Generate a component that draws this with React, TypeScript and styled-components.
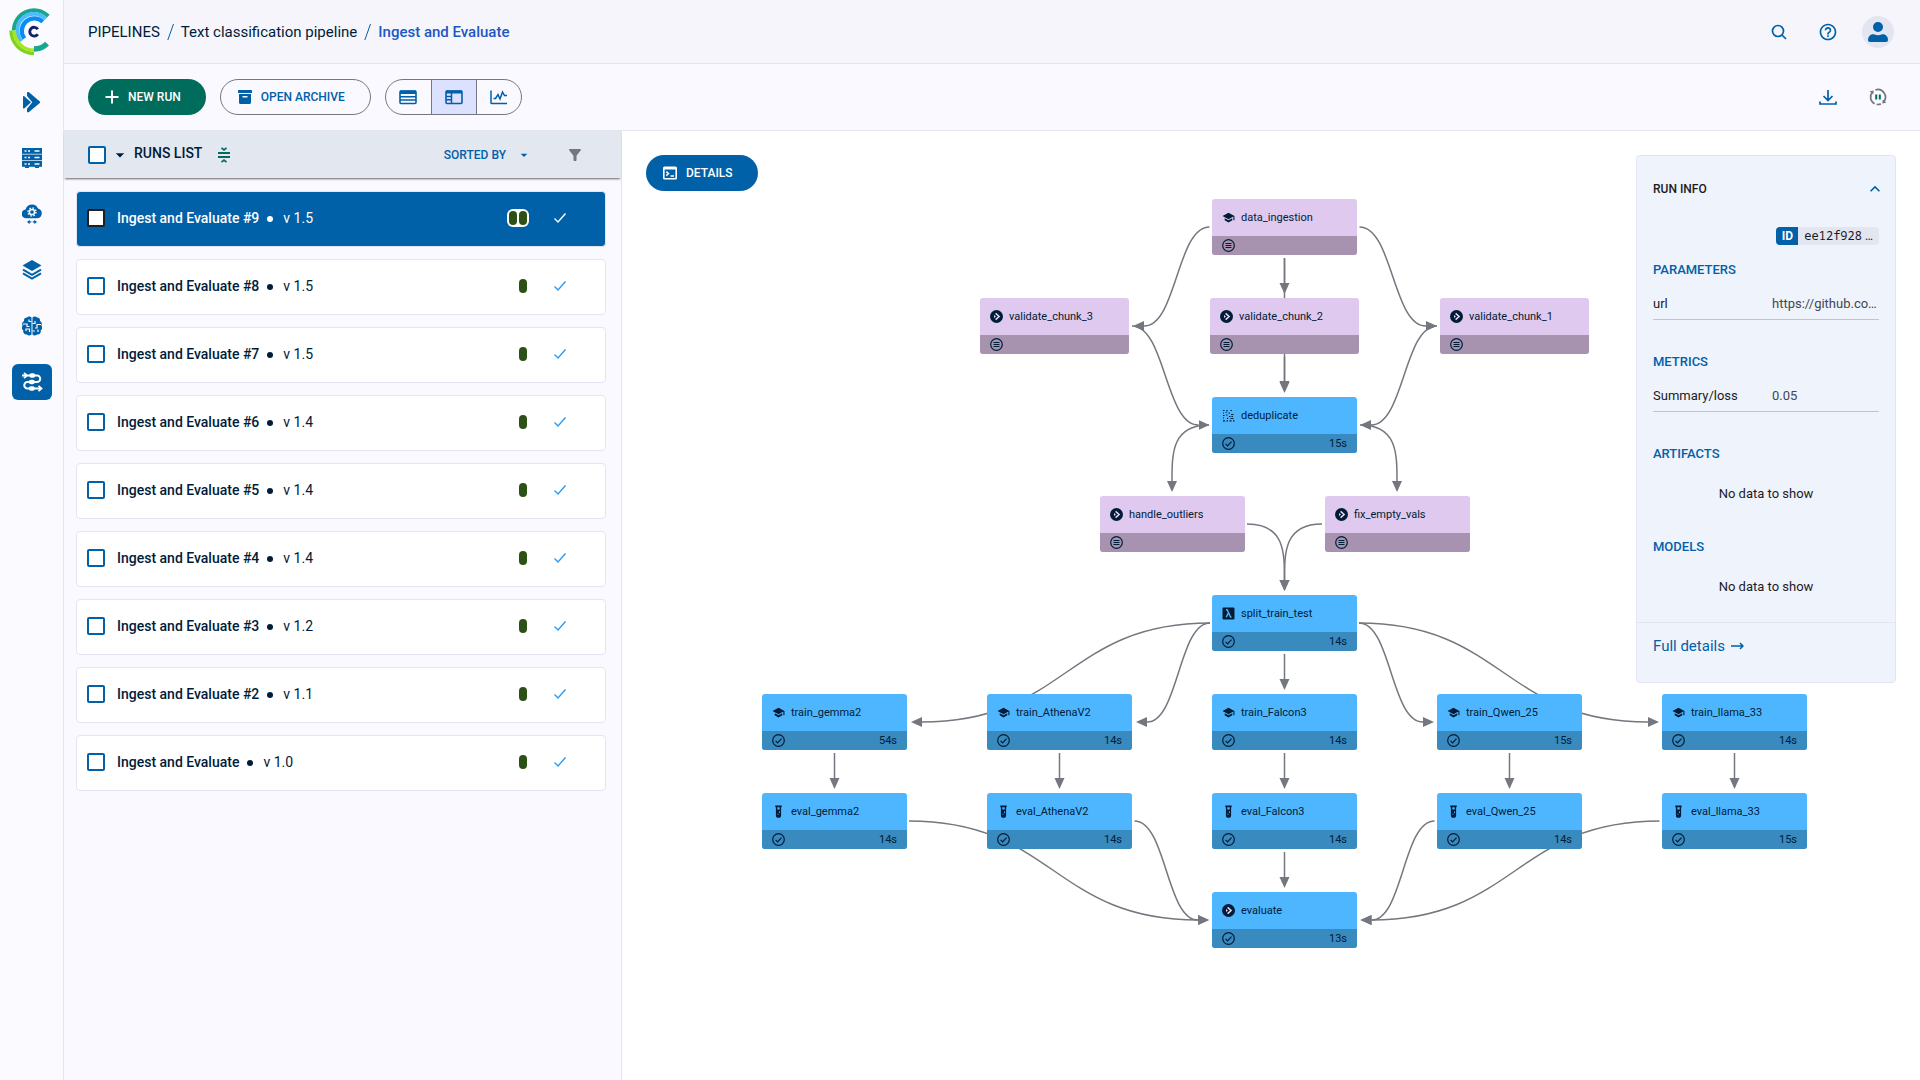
import React from 'react';
import styled, { createGlobalStyle, css } from 'styled-components';
import {
  MdSchool,
  MdHelpOutline,
  MdArrowDropDown,
  MdFilterAlt,
  MdKeyboardArrowUp,
} from 'react-icons/md';

const color = {
  primary: '#0060a8',
  link: '#2057c4',
  ink: '#001c38',
  body: '#1b1b1f',
  line: '#e3e6f0',
  outline: '#74777f',
  green: '#006c5b',
};

const GlobalStyle = createGlobalStyle`
  *, *::before, *::after { box-sizing: border-box; }
  html, body, #root { height: 100%; }
  body {
    margin: 0;
    background: #faf9ff;
    color: ${color.body};
    font-family: Roboto, "Noto Sans", sans-serif;
    font-size: 14px;
    line-height: 20px;
  }
  button, input { font: inherit; }
  button { margin: 0; padding: 0; border: 0; background: none; cursor: pointer; }
  a { color: inherit; text-decoration: none; }
  h1, h2, h3, ul, ol, dl, dd { margin: 0; padding: 0; }
  ul, ol { list-style: none; }
  svg { display: block; flex: none; }
`;

/* ---------- shell ---------- */

const Shell = styled.div`
  display: flex;
  min-height: 100vh;
`;

const Sidebar = styled.nav`
  display: flex;
  flex-direction: column;
  align-items: center;
  width: 64px;
  flex: none;
  padding: 8px 0;
  background: #fbfbff;
  border-right: 1px solid ${color.line};
`;

const LogoLink = styled.a`
  display: block;
  margin: 0 6px 28px 2px;
`;

const NavList = styled.ul`
  display: grid;
  gap: 20px;
`;

const NavLink = styled.a<{ $active?: boolean }>`
  display: flex;
  align-items: center;
  justify-content: center;
  width: 40px;
  height: 36px;
  border-radius: 6px;
  color: ${(p) => (p.$active ? '#fff' : color.primary)};
  background: ${(p) => (p.$active ? color.primary : 'transparent')};
`;

const Page = styled.div`
  display: flex;
  flex: 1;
  flex-direction: column;
  min-width: 0;
`;

const TopBar = styled.header`
  display: flex;
  align-items: center;
  justify-content: space-between;
  height: 64px;
  padding: 0 26px 0 24px;
  background: #f5f5fb;
  border-bottom: 1px solid ${color.line};
`;

const Crumbs = styled.ol`
  display: flex;
  gap: 7px;
  color: ${color.ink};
  font-size: 15px;
`;

const Crumb = styled.li<{ $current?: boolean }>`
  display: flex;
  gap: 7px;
  ${(p) =>
    p.$current &&
    css`
      color: ${color.link};
      font-weight: 500;
    `}
`;

const Slash = styled.svg`
  width: 7px;
  height: 20px;
  color: ${color.primary};
`;

const Actions = styled.div<{ $gap: number }>`
  display: flex;
  align-items: center;
  gap: ${(p) => p.$gap}px;
`;

const IconButton = styled.button<{ $size?: number }>`
  display: flex;
  align-items: center;
  justify-content: center;
  width: ${(p) => p.$size ?? 20}px;
  height: ${(p) => p.$size ?? 20}px;
  color: ${color.primary};
`;

const Avatar = styled(IconButton)`
  border-radius: 50%;
  background: ${color.line};
`;

const Toolbar = styled.div`
  display: flex;
  align-items: center;
  justify-content: space-between;
  height: 67px;
  padding: 0 32px 0 24px;
  border-bottom: 1px solid ${color.line};
`;

const PillButton = styled.button<{ $kind: 'green' | 'blue' | 'outline' }>`
  display: flex;
  align-items: center;
  gap: 9px;
  height: 36px;
  padding: 0 25px 0 17px;
  border-radius: 18px;
  font-size: 12px;
  font-weight: 500;
  white-space: nowrap;
  ${(p) =>
    p.$kind === 'outline'
      ? css`
          border: 1px solid ${color.outline};
          color: ${color.primary};
        `
      : css`
          background: ${p.$kind === 'green' ? color.green : color.primary};
          color: #fff;
        `}
`;

const Segments = styled.div`
  display: flex;
  height: 36px;
  overflow: hidden;
  border: 1px solid ${color.outline};
  border-radius: 18px;
`;

const Segment = styled.button<{ $on?: boolean }>`
  display: flex;
  align-items: center;
  justify-content: center;
  width: 45px;
  color: ${color.primary};
  background: ${(p) => (p.$on ? '#dbe1ff' : 'transparent')};
  & + & { border-left: 1px solid ${color.outline}; }
`;

const Body = styled.main`
  display: flex;
  flex: 1;
  min-height: 0;
`;

/* ---------- runs list ---------- */

const RunsPane = styled.section`
  width: 558px;
  flex: none;
  border-right: 1px solid ${color.line};
`;

const RunsHead = styled.div`
  display: flex;
  align-items: center;
  height: 47px;
  padding: 0 38px 0 24px;
  background: #e3e7f0;
  box-shadow: 0 2px 2px -1px rgba(0, 0, 0, 0.6);
`;

const RunsTitle = styled.h1`
  margin: 0 12px 4px 0;
  color: ${color.ink};
  font-size: 14px;
  font-weight: 500;
`;

const SortButton = styled.button`
  display: flex;
  align-items: center;
  gap: 10px;
  margin: 0 35px 0 auto;
  color: ${color.primary};
  font-size: 12px;
  font-weight: 500;
`;

const CaretButton = styled(IconButton)`
  margin: 0 4px 0 4px;
  color: ${color.ink};
`;

const Check = styled.input<{ $dark?: boolean }>`
  appearance: none;
  width: 18px;
  height: 18px;
  flex: none;
  margin: 0;
  border: 2px solid ${(p) => (p.$dark ? '#1f1f1f' : color.primary)};
  border-radius: 2px;
  background: #fff;
`;

const RunItems = styled.ul`
  display: grid;
  gap: 12px;
  padding: 13px 15px 24px 12px;
`;

const Run = styled.li<{ $selected?: boolean }>`
  display: flex;
  align-items: center;
  height: 56px;
  padding: 0 38px 2px 10px;
  border: 1px solid ${color.line};
  border-radius: 4px;
  background: ${(p) => (p.$selected ? color.primary : '#fff')};
  color: ${(p) => (p.$selected ? '#fff' : color.ink)};
`;

const RunName = styled.label`
  margin-left: 12px;
  font-weight: 500;
`;

const Dot = styled.span`
  width: 6px;
  height: 6px;
  margin: 2px 10px 0 8px;
  border-radius: 50%;
  background: currentColor;
`;

const Tags = styled.span<{ $selected?: boolean }>`
  display: flex;
  gap: 2px;
  margin: 0 24px 0 auto;
  padding: 2px;
  border-radius: 6px;
  background: ${(p) => (p.$selected ? '#fff' : 'transparent')};
`;

const Tag = styled.i`
  width: 8px;
  height: 14px;
  border-radius: 4px;
  background: #2d5016;
`;

const DoneMark = styled.svg<{ $selected?: boolean }>`
  width: 14px;
  height: 12px;
  color: ${(p) => (p.$selected ? '#fff' : '#2f9bf0')};
`;

/* ---------- graph ---------- */

const Canvas = styled.section`
  position: relative;
  flex: 1;
  min-width: 0;
  overflow: hidden;
  padding: 24px;
  background: #fff;
`;

const Edges = styled.svg`
  position: absolute;
  inset: 0;
  width: 100%;
  height: 100%;
`;

const NodeBox = styled.article<{ $x: number; $y: number; $w: number; $cached?: boolean }>`
  position: absolute;
  left: ${(p) => p.$x}px;
  top: ${(p) => p.$y}px;
  width: ${(p) => p.$w}px;
  overflow: hidden;
  border-radius: 3px;
  background: ${(p) => (p.$cached ? '#dfc9ef' : '#4eb6ff')};
  color: ${color.ink};
  font-size: 11px;
`;

const NodeTop = styled.div`
  display: flex;
  align-items: center;
  gap: 6px;
  height: 37px;
  padding: 0 10px;
`;

const NodeFoot = styled.div<{ $cached?: boolean }>`
  display: flex;
  align-items: center;
  justify-content: space-between;
  height: 19px;
  padding: 0 10px;
  background: ${(p) => (p.$cached ? '#a793b0' : '#388abf')};
`;

const DetailsButton = styled(PillButton)`
  position: relative;
`;

/* ---------- run info ---------- */

const Info = styled.aside`
  position: absolute;
  top: 24px;
  right: 24px;
  width: 260px;
  border: 1px solid ${color.line};
  border-radius: 4px;
  background: #eff3fc;
`;

const InfoBody = styled.div`
  padding: 0 16px 5px;
`;

const InfoHead = styled.div`
  display: flex;
  align-items: center;
  justify-content: space-between;
  height: 66px;
  margin-right: -6px;
`;

const InfoTitle = styled.h2`
  font-size: 12px;
  font-weight: 500;
`;

const IdRow = styled.div`
  display: flex;
  justify-content: flex-end;
  margin: 5px 0 15px;
`;

const IdChip = styled.button`
  display: flex;
  overflow: hidden;
  height: 18px;
  border-radius: 4px;
  background: ${color.line};
  color: ${color.body};
  font-size: 12px;
  line-height: 18px;
`;

const IdLabel = styled.b`
  width: 22px;
  background: ${color.primary};
  color: #fff;
  text-align: center;
`;

const IdValue = styled.span`
  display: flex;
  gap: 3px;
  padding: 0 6px;
`;

const Mono = styled.span`
  font-family: "Noto Sans Mono", "DejaVu Sans Mono", monospace;
`;

const GroupTitle = styled.h3`
  color: ${color.primary};
  font-size: 13px;
  font-weight: 500;
`;

const Pair = styled.dl`
  display: grid;
  grid-template-columns: 119px minmax(0, 1fr);
  height: 32px;
  margin: 8px 0 32px;
  padding-top: 6px;
  border-bottom: 1px solid #c0c5d0;
  font-size: 13px;
`;

const PairValue = styled.dd`
  color: #44474e;
  white-space: nowrap;
`;

const Empty = styled.p<{ $last?: boolean }>`
  margin: 0 0 ${(p) => (p.$last ? 0 : 13)}px;
  padding: 20px 0;
  font-size: 13px;
  text-align: center;
`;

const InfoFoot = styled.div`
  padding: 13px 16px 26px;
  border-top: 1px solid ${color.line};
`;

const FullLink = styled.a`
  display: flex;
  align-items: center;
  gap: 6px;
  color: ${color.primary};
  font-size: 15px;
`;

/* ---------- icons ---------- */

const Logo = () => (
  <svg width="42" height="48" viewBox="0 0 42 48" fill="none" aria-hidden="true">
    <path d="M39.3 8.2A20.2 20.2 0 0 0 4.8 22.5" stroke="#16a78c" strokeWidth="3.9" />
    <path d="M38.1 35.6A18.5 18.5 0 0 1 25 41" stroke="#16a78c" strokeWidth="5.400" />
    <path d="M36.7 10.8A16.5 16.5 0 0 0 12.4 33.1" stroke="#4dbbff" strokeWidth="3.8" />
    <path d="M33.8 13.7A12.5 12.5 0 0 0 15.4 30.5" stroke="#0a8cf5" strokeWidth="4.2" />
    <path d="M2 22.5A23 23 0 0 0 25 45.5" stroke="#7ed321" strokeWidth="3.4" />
    <path d="M5.3 22.5A19.7 19.7 0 0 0 25 42.2" stroke="#a8e420" strokeWidth="3.3" />
    <path d="M28.8 21.2a4.4 4.4 0 1 0 0 5" stroke="#12206b" strokeWidth="2.9" />
  </svg>
);

const ProjectsIcon = () => (
  <svg width="20" height="22" viewBox="-1 -1 20 22" fill="currentColor" aria-hidden="true">
    <path d="M4 .6C4 0 5.200-.3 6 .3l10.800 9.200c.5.400.5 1 0 1.500L6 20c-.8.600-2 .3-2-.3v-2.900l5.300-6.500L4 3.900z" />
    <path d="M0 4.600c0-.5.900-.8 1.500-.2l6.500 5.900-6.500 5.900c-.6.600-1.500.300-1.500-.2z" />
  </svg>
);

const ServersIcon = () => (
  <svg width="20" height="22" viewBox="0 0 20 22" fill="currentColor" aria-hidden="true">
    {[1, 7.5, 14].map((y) => (
      <g key={y}>
        <rect x="0" y={y} width="20" height="5.8" />
        <path d={`M2.5 ${y + 2.9}h2M6 ${y + 2.9}h2M12.5 ${y + 2.9}h5`} stroke="#fbfbff" strokeWidth="1.5" />
      </g>
    ))}
    <path d="M3 19.5h4V21H3zM13 19.5h4V21h-4z" />
  </svg>
);

const CloudIcon = () => (
  <svg width="20" height="20" viewBox="0 0 20 20" fill="currentColor" aria-hidden="true">
    <path d="M4.5 14.3A4.4 4.4 0 0 1 3.6 5.5 6.6 6.6 0 0 1 16 4.5a5 5 0 0 1-.5 9.8z" />
    <circle cx="10" cy="8" r="2.6" fill="none" stroke="#fbfbff" strokeWidth="1.5" />
    <circle cx="10" cy="8" r="4" fill="none" stroke="#fbfbff" strokeWidth="1.4" strokeDasharray="1.5 1.64" />
    <path d="m5 17.9 2.7-2.2v1.5h1.6v1.4H7.7v1.5zM15 17.9l-2.7-2.2v1.5h-1.6v1.4h1.6v1.5z" />
  </svg>
);

const LayersIcon = () => (
  <svg width="20" height="20" viewBox="0 0 20 20" fill="currentColor" aria-hidden="true">
    <path d="m10 0 9.5 5.5L10 11 .5 5.5z" />
    <path d="m1 9.6 9 5.2 9-5.2M1 13.4l9 5.2 9-5.2" fill="none" stroke="currentColor" strokeWidth="1.9" />
  </svg>
);

const BrainIcon = () => (
  <svg width="20" height="20" viewBox="0 0 20 20" fill="currentColor" aria-hidden="true">
    <path d="M9.5 1.6A3 3 0 0 0 5 1.5 3.2 3.2 0 0 0 2 5a3.3 3.3 0 0 0-1.3 4.500 3.300 3.300 0 0 0 .6 4.800A3.300 3.300 0 0 0 5 18.500a3 3 0 0 0 4.500-.1z" />
    <path d="M10.500 1.600a3 3 0 0 1 4.500-.1A3.200 3.200 0 0 1 18 5a3.300 3.300 0 0 1 1.300 4.500 3.300 3.300 0 0 1-.6 4.800 3.300 3.300 0 0 1-3.700 4.200 3 3 0 0 1-4.500-.1z" />
    <path
      d="M9.5 5.5H7V3.6M1 8h4v2.5h2.5M4 15v-2h3.5v3M10.5 7.5H13V5M19 8.5h-4V12h-2M16 16v-2.5M10.5 15H13"
      fill="none"
      stroke="#fbfbff"
      strokeWidth="1.2"
    />
  </svg>
);

const PipelinesIcon = () => (
  <svg width="22" height="20" viewBox="0 0 22 20" fill="none" stroke="currentColor" aria-hidden="true">
    <path d="M1 3.500h15a3.200 3.200 0 0 1 0 6.500H6.500a3.200 3.200 0 0 0 0 6.500H20" strokeWidth="2" />
    <path d="m3 .8 3 2.700-3 2.700M17.500 13.800l3 2.700-3 2.700" strokeWidth="1.800" />
    <path d="M10.500 3.500h1.600M10 10h1.600M10 16.500h1.600" strokeWidth="4.400" strokeLinecap="round" />
  </svg>
);

const SearchIcon = () => (
  <svg width="16" height="16" viewBox="0 0 16 16" fill="none" stroke="currentColor" strokeWidth="1.7" aria-hidden="true">
    <circle cx="7" cy="7" r="5.5" />
    <path d="m11 11 4 4" />
  </svg>
);

const UserIcon = () => (
  <svg width="20" height="20" viewBox="0 0 20 20" fill="currentColor" aria-hidden="true">
    <circle cx="10" cy="5" r="5" />
    <path d="M3.500 12.600c1-.5 2-.4 3 0 2.200.9 4.800.9 7 0 1-.4 2-.5 3 0 2 .9 3.500 2.800 3.500 5.400 0 1.200-.8 2-2 2H2c-1.200 0-2-.8-2-2 0-2.600 1.500-4.500 3.500-5.400z" />
  </svg>
);

const PlusIcon = () => (
  <svg width="14" height="14" viewBox="0 0 14 14" stroke="currentColor" strokeWidth="2" aria-hidden="true">
    <path d="M7 .5v13M.5 7h13" />
  </svg>
);

const ArchiveIcon = () => (
  <svg width="14" height="14" viewBox="0 0 14 14" fill="currentColor" aria-hidden="true">
    <rect x="0" y="0" width="14" height="3" rx=".6" />
    <path d="M1 4h12v8.500c0 .8-.7 1.500-1.500 1.500h-9C1.700 14 1 13.300 1 12.500zm3.500 2v1.500h5V6z" fillRule="evenodd" />
  </svg>
);

const TableIcon = () => (
  <svg width="18" height="16" viewBox="0 0 18 16" aria-hidden="true">
    <rect x="1" y="2" width="16" height="12.5" rx="1" fill="none" stroke="currentColor" strokeWidth="1.6" />
    <path d="M1 3.3h16" stroke="currentColor" strokeWidth="3.4" />
    <path d="M1 7.7h16M1 11h16" stroke="currentColor" strokeWidth="1.5" />
  </svg>
);

const SplitIcon = () => (
  <svg width="18" height="16" viewBox="0 0 18 16" aria-hidden="true">
    <rect x="1" y="2" width="16" height="12.5" rx="1" fill="none" stroke="currentColor" strokeWidth="1.6" />
    <path d="M1 3h16" stroke="currentColor" strokeWidth="3" />
    <path d="M6.5 3v11.5M1 7.5h5M1 10.8h5" stroke="currentColor" strokeWidth="1.5" />
  </svg>
);

const ChartIcon = () => (
  <svg width="18" height="16" viewBox="0 0 18 16" fill="none" stroke="currentColor" aria-hidden="true">
    <path d="M1 1.500v12.300c0 .5.300.8.800.8H17" strokeWidth="1.500" />
    <path d="M3.500 9.500h2L8 5.500l2 4.500L12.500 3l2 3.500H17" strokeWidth="1.500" />
  </svg>
);

const DownloadIcon = () => (
  <svg width="18" height="18" viewBox="0 0 18 18" fill="none" stroke="currentColor" strokeWidth="1.7" aria-hidden="true">
    <path d="M9 2v10M4.500 8 9 12.500 13.500 8M1 13.500V16h16v-2.500" />
  </svg>
);

const RefreshIcon = () => (
  <svg width="18" height="18" viewBox="0 0 18 18" fill="none" stroke={color.outline} strokeWidth="1.7" aria-hidden="true">
    <path d="M5.6 15.7A7.500 7.500 0 0 1 3.200 4.300" />
    <path d="M6.400 2A7.500 7.500 0 0 1 14.800 13.700" />
    <path d="M7.600 16.400a7.500 7.500 0 0 0 4.200-.5" />
    <path d="M.6 3.200 4.800 2.600l-.6 3.900zM17.400 14.800l-4.200.6.6-3.900z" fill={color.outline} stroke="none" />
    <path d="M7.200 6.500v5M10.800 6.500v5" stroke={color.green} strokeWidth="2" />
  </svg>
);

const CompressIcon = () => (
  <svg width="12" height="16" viewBox="0 0 12 16" fill="none" stroke={color.green} aria-hidden="true">
    <path d="M0 6h12M0 10h12" strokeWidth="2" />
    <path d="m3.500.9 2.500 2 2.500-2M3.500 15.100l2.500-2 2.500 2" strokeWidth="1.800" />
  </svg>
);

const TerminalIcon = () => (
  <svg width="14" height="14" viewBox="0 0 14 14" fill="none" stroke="currentColor" aria-hidden="true">
    <rect x=".8" y="1.3" width="12.4" height="11.4" rx=".8" strokeWidth="1.6" />
    <path d="M.8 2.3h12.400" strokeWidth="2.400" />
    <path d="m3.300 5.600 2.200 2-2.200 2M7.500 10H11" strokeWidth="1.500" />
  </svg>
);

const ArrowIcon = () => (
  <svg width="13" height="10" viewBox="0 0 13 10" fill="none" stroke="currentColor" strokeWidth="1.5" aria-hidden="true">
    <path d="M0 5h12M9 2l3 3-3 3" />
  </svg>
);

const CircleArrowIcon = () => (
  <svg width="13" height="13" viewBox="0 0 13 13" aria-hidden="true">
    <circle cx="6.5" cy="6.5" r="6.5" fill={color.ink} />
    <path d="m5.600 3.400 3.500 3.100-3.500 3.100" fill="none" stroke="#e8d9f5" strokeWidth="1.500" />
    <path d="m4 5 1.900 1.500L4 8z" fill="#e8d9f5" />
  </svg>
);

const CachedIcon = () => (
  <svg width="13" height="13" viewBox="0 0 13 13" fill="none" stroke={color.ink} aria-hidden="true">
    <circle cx="6.5" cy="6.5" r="5.8" strokeWidth="1.2" />
    <path d="M3.5 4.5h6M3.5 6.5h6M3.5 8.5h6" strokeWidth="1.2" />
  </svg>
);

const DoneIcon = () => (
  <svg width="13" height="13" viewBox="0 0 13 13" fill="none" stroke={color.ink} strokeWidth="1.2" aria-hidden="true">
    <circle cx="6.5" cy="6.5" r="5.8" />
    <path d="m3.600 6.800 2 2 3.900-4.200" />
  </svg>
);

const TubeIcon = () => (
  <svg width="13" height="13" viewBox="0 0 13 13" fill={color.ink} aria-hidden="true">
    <path d="M3.300.5h6.400v1.700h-.6v8a2.600 2.600 0 0 1-5.200 0v-8h-.6z" />
    <path d="M5.300 2.300h2.400v2.200H5.300zM7 6.500h1V8H7zM5.500 8.800h1v1h-1z" fill="#4eb6ff" />
  </svg>
);

const LambdaIcon = () => (
  <svg width="13" height="13" viewBox="0 0 13 13" aria-hidden="true">
    <rect x=".5" y=".5" width="12" height="12" rx="1" fill={color.ink} />
    <path d="M4 2.800h1.200L8.500 10h1M6.500 5.600 4.200 10.200" fill="none" stroke="#4eb6ff" strokeWidth="1.400" />
  </svg>
);

const ScatterIcon = () => (
  <svg width="13" height="13" viewBox="0 0 13 13" fill="none" stroke={color.ink} strokeWidth="1.2" aria-hidden="true">
    <path d="M1 1.500h1.500M1 4h1M1 6.500h1.500M1 9h1M1 11.800h2M4.500 11.800H6M7.500 11.800h2M11 11.800h1.500" />
    <path d="M5 1v1.500M8.500 1.500H10M6.500 4H8M4 6h1.500M9 5.500h2.500M7 7.500h1.500M5 9.300h1.200M8.500 9.500h3M9.500 7.500H11M3.500 3.500h1" />
  </svg>
);

/* ---------- data ---------- */

const runs = [
  ['Ingest and Evaluate #9', 'v 1.5'],
  ['Ingest and Evaluate #8', 'v 1.5'],
  ['Ingest and Evaluate #7', 'v 1.5'],
  ['Ingest and Evaluate #6', 'v 1.4'],
  ['Ingest and Evaluate #5', 'v 1.4'],
  ['Ingest and Evaluate #4', 'v 1.4'],
  ['Ingest and Evaluate #3', 'v 1.2'],
  ['Ingest and Evaluate #2', 'v 1.1'],
  ['Ingest and Evaluate', 'v 1.0'],
];

const kinds = {
  school: <MdSchool size={13} />,
  step: <CircleArrowIcon />,
  scatter: <ScatterIcon />,
  lambda: <LambdaIcon />,
  tube: <TubeIcon />,
};

type Step = { name: string; kind: keyof typeof kinds; x: number; row: number; time?: string; wide?: boolean };

// x is the left edge on the canvas; rows are evenly spaced
const steps: Step[] = [
  { name: 'data_ingestion', kind: 'school', x: 590, row: 0 },
  { name: 'validate_chunk_3', kind: 'step', x: 358, row: 1, wide: true },
  { name: 'validate_chunk_2', kind: 'step', x: 588, row: 1, wide: true },
  { name: 'validate_chunk_1', kind: 'step', x: 818, row: 1, wide: true },
  { name: 'deduplicate', kind: 'scatter', x: 590, row: 2, time: '15s' },
  { name: 'handle_outliers', kind: 'step', x: 478, row: 3 },
  { name: 'fix_empty_vals', kind: 'step', x: 703, row: 3 },
  { name: 'split_train_test', kind: 'lambda', x: 590, row: 4, time: '14s' },
  { name: 'train_gemma2', kind: 'school', x: 140, row: 5, time: '54s' },
  { name: 'train_AthenaV2', kind: 'school', x: 365, row: 5, time: '14s' },
  { name: 'train_Falcon3', kind: 'school', x: 590, row: 5, time: '14s' },
  { name: 'train_Qwen_25', kind: 'school', x: 815, row: 5, time: '15s' },
  { name: 'train_llama_33', kind: 'school', x: 1040, row: 5, time: '14s' },
  { name: 'eval_gemma2', kind: 'tube', x: 140, row: 6, time: '14s' },
  { name: 'eval_AthenaV2', kind: 'tube', x: 365, row: 6, time: '14s' },
  { name: 'eval_Falcon3', kind: 'tube', x: 590, row: 6, time: '14s' },
  { name: 'eval_Qwen_25', kind: 'tube', x: 815, row: 6, time: '14s' },
  { name: 'eval_llama_33', kind: 'tube', x: 1040, row: 6, time: '15s' },
  { name: 'evaluate', kind: 'step', x: 590, row: 7, time: '13s' },
];

const FIRST_ROW = 68;
const ROW_STEP = 99;
const rowTop = (row: number) => FIRST_ROW + row * ROW_STEP;
const mid = (row: number) => rowTop(row) + 28;

const HEAD = 11;

// S-curve between two side ports, stopping at the arrow head's base
const across = (x1: number, r1: number, tip: number, r2: number) => {
  const x2 = tip - Math.sign(tip - x1) * HEAD;
  const m = (x1 + x2) / 2;
  return `M${x1} ${mid(r1)}C${m} ${mid(r1)} ${m} ${mid(r2)} ${x2} ${mid(r2)}`;
};

// quarter turn from a side port down onto the top of the next node
const turn = (x1: number, r1: number, x2: number) => {
  const y2 = rowTop(r1 + 1) - 4 - HEAD;
  return `M${x1} ${mid(r1)}C${x2} ${mid(r1)} ${x2} ${(mid(r1) + y2) / 2} ${x2} ${y2}`;
};

const down = (x: number, r: number) => `M${x} ${rowTop(r) + 59}V${rowTop(r + 1) - 4 - HEAD}`;

const edges = [
  across(737.5, 0, 815, 1),
  across(587.5, 0, 511, 1),
  across(815, 1, 738, 2),
  across(510, 1, 587.5, 2),
  down(662.5, 0),
  'M662.5 127V250',
  down(662.5, 1),
  turn(738, 2, 775),
  turn(587, 2, 550),
  turn(625, 3, 662.5),
  turn(700, 3, 662.5),
  across(737, 4, 812, 5),
  across(737, 4, 1037, 5),
  across(588, 4, 514, 5),
  across(588, 4, 289, 5),
  down(662.5, 4),
  ...[212.5, 437.5, 662.5, 887.5, 1112.5].map((x) => down(x, 5)),
  down(662.5, 6),
  across(287, 6, 587, 7),
  across(512.5, 6, 587, 7),
  across(812.5, 6, 738.5, 7),
  across(1037.5, 6, 738.5, 7),
];

const Graph = () => (
  <>
    <Edges aria-hidden="true">
      <defs>
        <marker id="head" markerUnits="userSpaceOnUse" markerWidth="12" markerHeight="12" refX="0" refY="5" orient="auto">
          <path d="M0 0L11 5L0 10z" fill={color.outline} />
        </marker>
      </defs>
      <g fill="none" stroke={color.outline} strokeWidth="1.5">
        {edges.map((d) => (
          <path key={d} d={d} markerEnd="url(#head)" />
        ))}
      </g>
    </Edges>
    {steps.map((s) => (
      <NodeBox key={s.name} $x={s.x} $y={rowTop(s.row)} $w={s.wide ? 149 : 145} $cached={!s.time}>
        <NodeTop>
          {kinds[s.kind]}
          {s.name}
        </NodeTop>
        <NodeFoot $cached={!s.time}>
          {s.time ? <DoneIcon /> : <CachedIcon />}
          {s.time}
        </NodeFoot>
      </NodeBox>
    ))}
  </>
);

const RunInfo = () => (
  <Info>
    <InfoBody>
      <InfoHead>
        <InfoTitle>RUN INFO</InfoTitle>
        <IconButton $size={20} aria-label="Collapse run info">
          <MdKeyboardArrowUp size={20} />
        </IconButton>
      </InfoHead>
      <IdRow>
        <IdChip>
          <IdLabel>ID</IdLabel>
          <IdValue>
            <Mono>ee12f928</Mono>
            <span>…</span>
          </IdValue>
        </IdChip>
      </IdRow>
      <GroupTitle>PARAMETERS</GroupTitle>
      <Pair>
        <dt>url</dt>
        <PairValue>https://github.co…</PairValue>
      </Pair>
      <GroupTitle>METRICS</GroupTitle>
      <Pair>
        <dt>Summary/loss</dt>
        <PairValue>0.05</PairValue>
      </Pair>
      <GroupTitle>ARTIFACTS</GroupTitle>
      <Empty>No data to show</Empty>
      <GroupTitle>MODELS</GroupTitle>
      <Empty $last>No data to show</Empty>
    </InfoBody>
    <InfoFoot>
      <FullLink href="#details">
        Full details
        <ArrowIcon />
      </FullLink>
    </InfoFoot>
  </Info>
);

const nav = [
  ['Projects', <ProjectsIcon />],
  ['Datasets', <ServersIcon />],
  ['Orchestration', <CloudIcon />],
  ['Reports', <LayersIcon />],
  ['Models', <BrainIcon />],
  ['Pipelines', <PipelinesIcon />],
] as const;

const Divider = () => (
  <Slash viewBox="0 0 7 20" aria-hidden="true">
    <path d="M6.5 2 .8 18" stroke="currentColor" />
  </Slash>
);

export default function App() {
  return (
    <Shell>
      <GlobalStyle />
      <Sidebar>
        <LogoLink href="#home" aria-label="Home">
          <Logo />
        </LogoLink>
        <NavList>
          {nav.map(([label, icon]) => (
            <li key={label}>
              <NavLink href={`#${label}`} aria-label={label} $active={label === 'Pipelines'}>
                {icon}
              </NavLink>
            </li>
          ))}
        </NavList>
      </Sidebar>
      <Page>
        <TopBar>
          <Crumbs>
            <Crumb>
              <a href="#pipelines">PIPELINES</a>
              <Divider />
            </Crumb>
            <Crumb>
              <a href="#text">Text classification pipeline</a>
              <Divider />
            </Crumb>
            <Crumb $current>Ingest and Evaluate</Crumb>
          </Crumbs>
          <Actions $gap={22}>
            <IconButton $size={30} aria-label="Search">
              <SearchIcon />
            </IconButton>
            <IconButton $size={24} aria-label="Help">
              <MdHelpOutline size={20} />
            </IconButton>
            <Avatar $size={32} aria-label="Account">
              <UserIcon />
            </Avatar>
          </Actions>
        </TopBar>
        <Toolbar>
          <Actions $gap={14}>
            <PillButton $kind="green">
              <PlusIcon />
              NEW RUN
            </PillButton>
            <PillButton $kind="outline">
              <ArchiveIcon />
              OPEN ARCHIVE
            </PillButton>
            <Segments>
              <Segment aria-label="Table view">
                <TableIcon />
              </Segment>
              <Segment aria-label="Details view" $on>
                <SplitIcon />
              </Segment>
              <Segment aria-label="Compare view">
                <ChartIcon />
              </Segment>
            </Segments>
          </Actions>
          <Actions $gap={30}>
            <IconButton aria-label="Download">
              <DownloadIcon />
            </IconButton>
            <IconButton aria-label="Auto refresh">
              <RefreshIcon />
            </IconButton>
          </Actions>
        </Toolbar>
        <Body>
          <RunsPane>
            <RunsHead>
              <Check type="checkbox" aria-label="Select all runs" />
              <CaretButton aria-label="Selection options">
                <MdArrowDropDown size={20} />
              </CaretButton>
              <RunsTitle>RUNS LIST</RunsTitle>
              <IconButton aria-label="Collapse rows">
                <CompressIcon />
              </IconButton>
              <SortButton>
                SORTED BY
                <MdArrowDropDown size={16} />
              </SortButton>
              <IconButton $size={16} aria-label="Filter">
                <MdFilterAlt size={18} color={color.outline} />
              </IconButton>
            </RunsHead>
            <RunItems>
              {runs.map(([name, version], i) => (
                <Run key={name} $selected={i === 0}>
                  <Check type="checkbox" id={`run-${i}`} $dark={i === 0} />
                  <RunName htmlFor={`run-${i}`}>{name}</RunName>
                  <Dot />
                  {version}
                  <Tags $selected={i === 0}>
                    {i === 0 && <Tag />}
                    <Tag />
                  </Tags>
                  <DoneMark viewBox="0 0 14 12" $selected={i === 0} aria-hidden="true">
                    <path d="m1.500 6.500 3.500 3.500 7.500-8.500" fill="none" stroke="currentColor" strokeWidth="1.400" />
                  </DoneMark>
                </Run>
              ))}
            </RunItems>
          </RunsPane>
          <Canvas>
            <Graph />
            <DetailsButton $kind="blue">
              <TerminalIcon />
              DETAILS
            </DetailsButton>
            <RunInfo />
          </Canvas>
        </Body>
      </Page>
    </Shell>
  );
}
